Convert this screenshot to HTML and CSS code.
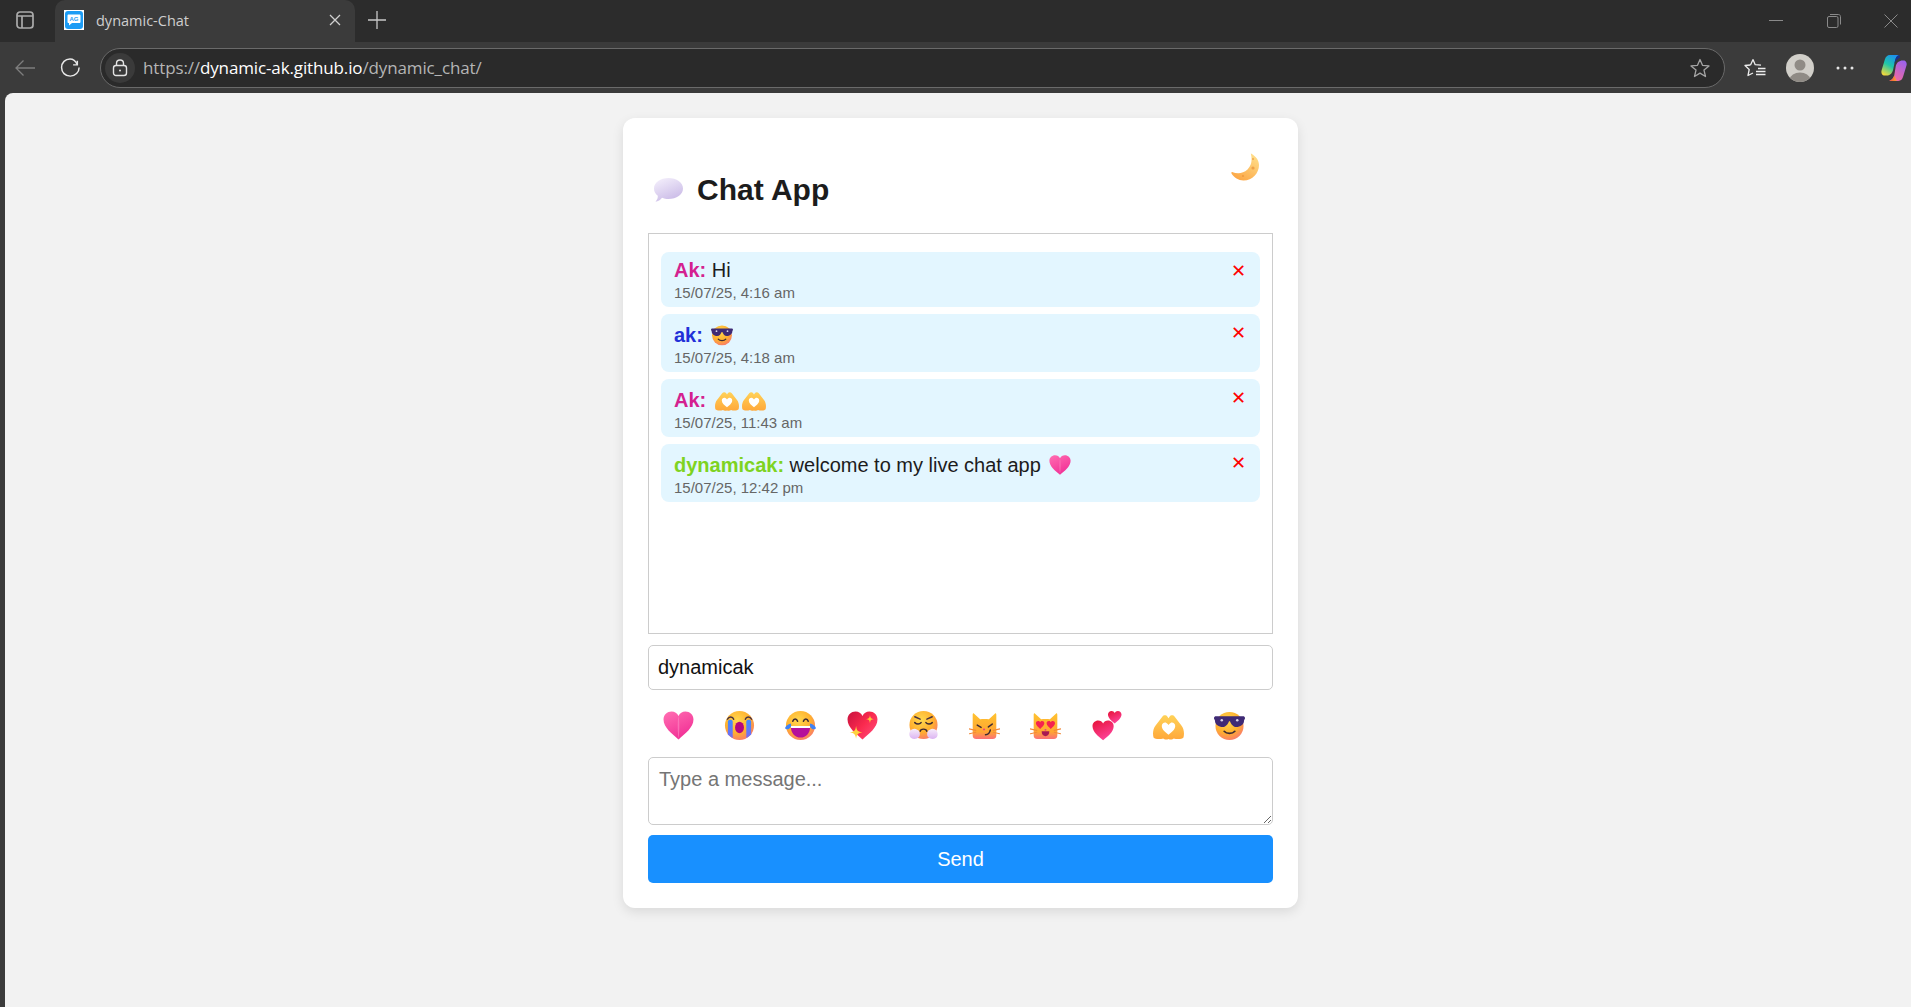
FILE: index.html
```html
<!DOCTYPE html>
<html lang="en">
<head>
    <meta charset="UTF-8">
    <meta name="viewport" content="width=device-width, initial-scale=1.0">
    <title>dynamic-Chat</title>
    <link rel="stylesheet" href="styles.css">
</head>
<body>
    <!-- shared emoji drawings -->
    <svg class="sprite" xmlns="http://www.w3.org/2000/svg">
        <defs>
            <radialGradient id="face" cx="42%" cy="32%" r="72%">
                <stop offset="0" stop-color="#ffd84f"/>
                <stop offset="0.6" stop-color="#ffb02e"/>
                <stop offset="1" stop-color="#f9786e"/>
            </radialGradient>
            <linearGradient id="pink" x1="0.2" y1="0" x2="0.7" y2="1">
                <stop offset="0" stop-color="#ff6ab0"/>
                <stop offset="1" stop-color="#f02c94"/>
            </linearGradient>
            <linearGradient id="red" x1="0" y1="0" x2="1" y2="0.8">
                <stop offset="0" stop-color="#c9123f"/>
                <stop offset="0.55" stop-color="#fa2a4e"/>
                <stop offset="1" stop-color="#ff4a78"/>
            </linearGradient>
            <linearGradient id="redpink" x1="0.2" y1="0" x2="0.7" y2="1">
                <stop offset="0" stop-color="#e8163f"/>
                <stop offset="1" stop-color="#ff46a0"/>
            </linearGradient>
            <linearGradient id="tear" x1="0" y1="0" x2="0" y2="1">
                <stop offset="0" stop-color="#3f8cff"/>
                <stop offset="1" stop-color="#7a6bf0"/>
            </linearGradient>
            <linearGradient id="hands" x1="0" y1="0" x2="0" y2="1">
                <stop offset="0" stop-color="#ffd258"/>
                <stop offset="1" stop-color="#ffa83a"/>
            </linearGradient>
            <linearGradient id="cat" x1="0" y1="0" x2="0" y2="1">
                <stop offset="0" stop-color="#ffc22f"/>
                <stop offset="0.72" stop-color="#ffa632"/>
                <stop offset="1" stop-color="#fb6f78"/>
            </linearGradient>
            <linearGradient id="moon" x1="0.8" y1="0" x2="0.2" y2="1">
                <stop offset="0" stop-color="#ffdf8a"/>
                <stop offset="1" stop-color="#fca544"/>
            </linearGradient>
            <linearGradient id="bubble" x1="0.2" y1="0" x2="0.7" y2="1">
                <stop offset="0" stop-color="#f3eefb"/>
                <stop offset="1" stop-color="#c8b8e6"/>
            </linearGradient>
            <linearGradient id="cloud" x1="0.5" y1="0" x2="0.5" y2="1">
                <stop offset="0" stop-color="#f6ecfa"/>
                <stop offset="1" stop-color="#dcb4f2"/>
            </linearGradient>
            <linearGradient id="cp1" x1="0.7" y1="0" x2="0.2" y2="1">
                <stop offset="0" stop-color="#1c8ff0"/>
                <stop offset="0.5" stop-color="#1fc7a8"/>
                <stop offset="1" stop-color="#f5d83a"/>
            </linearGradient>
            <linearGradient id="cp2" x1="0.8" y1="0" x2="0.2" y2="1">
                <stop offset="0" stop-color="#9a62ee"/>
                <stop offset="1" stop-color="#fb6a9a"/>
            </linearGradient>
            <linearGradient id="cp3" x1="0" y1="0" x2="1" y2="0">
                <stop offset="0" stop-color="#f0482a"/>
                <stop offset="1" stop-color="#f9a13a"/>
            </linearGradient>

            <path id="heart-shape" d="M16 29C10 24 2 18 2 10.5 2 6 5.5 3 9.5 3c3 0 5.3 1.6 6.5 4 1.2-2.4 3.5-4 6.5-4C26.500 3 30 6 30 10.500 30 18 22 24 16 29Z"/>
            <path id="star-shape" d="M0-6C.6-1.600 1.600-.6 6 0 1.600.6.6 1.600 0 6-.6 1.600-1.600.6-6 0-1.600-.6-.6-1.600 0-6Z"/>
            <path id="cat-head" d="M5 3.500 11.500 9.500C14 9.100 18 9.100 20.500 9.500L27 3.500C27.800 3.200 28.200 4 28.200 5V26C28.200 28.500 27 30 24.500 30H7.500C5 30 3.800 28.500 3.800 26V5C3.800 4 4.200 3.200 5 3.500Z"/>
        </defs>
        <symbol id="e-heart" viewBox="1.500 1.500 29 29">
            <use href="#heart-shape" fill="url(#pink)"/>
            <path d="M16 7C15 12 15 20 16 29 17 20 17 12 16 7Z" fill="#ff8ac4" opacity=".6"/>
        </symbol>
        <symbol id="e-cry" viewBox="0 0 32 32">
            <circle cx="16" cy="16" r="15" fill="url(#face)"/>
            <path d="M4 12C4 9.500 9 9.500 9 12V29C7 28 5 26.500 4 25Z" fill="url(#tear)"/>
            <path d="M23 12C23 9.500 28 9.500 28 12V25C27 26.500 25 28 23 29Z" fill="url(#tear)"/>
            <ellipse cx="16" cy="18" rx="4.600" ry="6" fill="#b5067f"/>
            <path d="M3.500 9.500C5 6.500 9 6.500 10 9.500M22 9.500C23 6.500 27 6.500 28.500 9.500" fill="none" stroke="#4a3340" stroke-width="1.500" stroke-linecap="round"/>
        </symbol>
        <symbol id="e-laugh" viewBox="0 0 32 32">
            <circle cx="16" cy="16" r="15" fill="url(#face)"/>
            <path d="M6 16.500H26C26 24 22 28.500 16 28.500S6 24 6 16.500Z" fill="#b5109b"/>
            <path d="M6 16.500H26L25.800 18.500H6.200Z" fill="#fff"/>
            <path d="M8 11.500C9 8.500 12 8.500 13 11.500M19 11.500C20 8.500 23 8.500 24 11.500" fill="none" stroke="#3d2a33" stroke-width="1.600" stroke-linecap="round"/>
            <path d="M0 18.500C1 16 4 14.500 6 14 7 16 6 18.500 4 19.500 2.500 20 .5 20 0 18.500Z" fill="#3f82f5"/>
            <path d="M32 18.500C31 16 28 14.500 26 14 25 16 26 18.500 28 19.500 29.500 20 31.500 20 32 18.500Z" fill="#3f82f5"/>
        </symbol>
        <symbol id="e-sparkle" viewBox="1.500 1.500 29 29">
            <use href="#heart-shape" fill="url(#red)"/>
            <use href="#star-shape" transform="translate(10 22.500)" fill="#ffd23f"/>
            <use href="#star-shape" transform="translate(23 10) scale(.65)" fill="#ffc53a"/>
        </symbol>
        <symbol id="e-steam" viewBox="0 0 32 32">
            <circle cx="16" cy="15.500" r="14.500" fill="url(#face)"/>
            <path d="M7 7 12.500 9.500M25 7 19.500 9.500" stroke="#4a3340" stroke-width="1.500" stroke-linecap="round"/>
            <path d="M7 13C9 15 12 15 13.500 13M18.500 13C20 15 23 15 25 13" fill="none" stroke="#3d2a33" stroke-width="1.600" stroke-linecap="round"/>
            <path d="M12.500 22C13 19 19 19 19.500 22" fill="none" stroke="#3d2a33" stroke-width="1.500" stroke-linecap="round"/>
            <path d="M1.500 26C.5 21 6 17.500 9.500 20.500 13 21 13.500 28.500 9 29.500 6 30.500 2 29.500 1.500 26Z" fill="url(#cloud)"/>
            <path d="M30.500 26C31.500 21 26 17.500 22.500 20.500 19 21 18.500 28.500 23 29.500 26 30.500 30 29.500 30.500 26Z" fill="url(#cloud)"/>
        </symbol>
        <symbol id="e-cat-smirk" viewBox="0 0 32 32">
            <use href="#cat-head" fill="url(#cat)"/>
            <path d="M8.500 15.500 12.500 18M24 14.500 20 17.500" stroke="#3d2a33" stroke-width="1.500" stroke-linecap="round"/>
            <circle cx="15.500" cy="20" r="1" fill="#f0308e"/>
            <path d="M17 25.500C19.500 25.500 21.500 23.500 22 20.500" fill="none" stroke="#3d2a33" stroke-width="1.500" stroke-linecap="round"/>
            <path d="M0 19.500 7 21M0.500 24.500 7 23M32 19.500 25 21M31.500 24.500 25 23" stroke="#f28a3a" stroke-width="1.200" stroke-linecap="round"/>
        </symbol>
        <symbol id="e-cat-love" viewBox="0 0 32 32">
            <use href="#cat-head" fill="url(#cat)"/>
            <use href="#heart-shape" transform="translate(5.500 10.500) scale(.31)" fill="#f5224f"/>
            <use href="#heart-shape" transform="translate(16.500 10.500) scale(.31)" fill="#f5224f"/>
            <circle cx="16" cy="20.500" r="1" fill="#f0308e"/>
            <path d="M12 22H20C20 25.500 18 27 16 27S12 25.500 12 22Z" fill="#a81852"/>
            <path d="M0 19.500 7 21M0.500 24.500 7 23M32 19.500 25 21M31.500 24.500 25 23" stroke="#f28a3a" stroke-width="1.200" stroke-linecap="round"/>
        </symbol>
        <symbol id="e-two-hearts" viewBox="0 0 32 32">
            <use href="#heart-shape" transform="translate(0 8.500) scale(.78)" fill="url(#redpink)"/>
            <use href="#heart-shape" transform="translate(16.500 -.5) scale(.5)" fill="url(#redpink)"/>
        </symbol>
        <symbol id="e-hands" viewBox="1 1 30 30">
            <path d="M16 29C14 30 12 29.500 11 28.500 8 29.500 3 29.500 1.500 27.500.5 24 1 19 3.500 16L10 7.500C11.500 5.500 14 6 15 7.500L16 9 17 7.500C18 6 20.500 5.500 22 7.500L28.500 16C31 19 31.500 24 30.500 27.500 29 29.500 24 29.500 21 28.500 20 29.500 18 30 16 29Z" fill="url(#hands)"/>
            <path d="M16 25C13 22.500 9.500 20 9.500 16.500 9.500 14 12 12.500 14 13.500 15 14 15.700 14.800 16 15.500 16.300 14.800 17 14 18 13.500 20 12.500 22.500 14 22.500 16.500 22.500 20 19 22.500 16 25Z" fill="#fff"/>
        </symbol>
        <symbol id="e-cool" viewBox="0 0 32 32">
            <circle cx="16" cy="16.500" r="14.500" fill="url(#face)"/>
            <path d="M10.500 22C13 25 19 25 21.500 22" fill="none" stroke="#3d2a33" stroke-width="1.800" stroke-linecap="round"/>
            <path d="M0 8.500C0 7 1 6.500 2 6.500H30C31 6.500 32 7 32 8.500 32 9.500 31 10 31 11 31 15 27 17.500 23 17.500 19.500 17.500 17.500 14 16.500 11.500H15.500C14.500 14 12.500 17.500 9 17.500 5 17.500 1 15 1 11 1 10 0 9.500 0 8.500Z" fill="#3f2a75"/>
            <circle cx="8" cy="10.500" r="1.300" fill="#d9d4ea"/>
            <circle cx="24" cy="10.500" r="1.300" fill="#d9d4ea"/>
        </symbol>
    </svg>

    <div class="window">
        <div class="tabstrip">
            <div class="strip-btn">
                <svg width="18" height="18" viewBox="0 0 18 18" fill="none" stroke="#ababab" stroke-width="1.700">
                    <rect x="1" y="1" width="16" height="16" rx="3"/>
                    <path d="M1 5H17M6 5V17"/>
                </svg>
            </div>
            <div class="tab">
                <svg class="favicon" width="20" height="20" viewBox="0 0 20 20">
                    <rect width="20" height="20" fill="#fff"/>
                    <rect x="1" y="1" width="18" height="18" rx="3" fill="#1c9cf5"/>
                    <path d="M4.500 4.500H15.500C16 4.500 16.500 5 16.500 5.500V12C16.500 12.500 16 13 15.500 13H8L5 15.500V13H4.500C4 13 3.500 12.500 3.500 12V5.500C3.500 5 4 4.500 4.500 4.500Z" fill="#fff"/>
                    <text class="favicon-text" x="10" y="11.200" text-anchor="middle">AG</text>
                </svg>
                <span class="tab-title">dynamic-Chat</span>
                <svg class="tab-close" width="12" height="12" viewBox="0 0 12 12" stroke="#d0d0d0" stroke-width="1.300">
                    <path d="M1 1 11 11M11 1 1 11"/>
                </svg>
            </div>
            <div class="new-tab">
                <svg width="18" height="18" viewBox="0 0 18 18" stroke="#c8c8c8" stroke-width="1.300">
                    <path d="M9 0V18M0 9H18"/>
                </svg>
            </div>
            <div class="win-controls">
                <div class="win-btn">
                    <svg width="14" height="14" viewBox="0 0 14 14" stroke="#8a8a8a" stroke-width="1"><path d="M0 6.500H14"/></svg>
                </div>
                <div class="win-btn">
                    <svg width="14" height="14" viewBox="0 0 14 14" fill="none" stroke="#8a8a8a" stroke-width="1">
                        <rect x=".5" y="2.500" width="10.500" height="11" rx="1.500"/>
                        <path d="M3 .5H11.500C12.500 .5 13.500 1.500 13.500 2.500V10.500"/>
                    </svg>
                </div>
                <div class="win-btn">
                    <svg width="14" height="14" viewBox="0 0 14 14" stroke="#8a8a8a" stroke-width="1"><path d="M.5.5 13.500 13.500M13.500.5.5 13.500"/></svg>
                </div>
            </div>
        </div>

        <div class="toolbar">
            <div class="tool-btn">
                <svg width="20" height="18" viewBox="0 0 20 18" fill="none" stroke="#7e7e7e" stroke-width="1.300">
                    <path d="M20 9H1M8.500 1.500 1 9 8.500 16.500"/>
                </svg>
            </div>
            <div class="tool-btn">
                <svg width="21" height="21" viewBox="0 0 20 20" fill="none" stroke="#e8e8e8" stroke-width="1.400">
                    <path d="M16.500 3.500V7.500H12.500"/>
                    <path d="M16.300 7C14.900 3.800 12.300 1.800 9.500 1.800 5 1.800 1.500 5.400 1.500 10S5 18.200 9.800 18.200 18.200 14.500 18.200 10"/>
                </svg>
            </div>
            <div class="address">
                <span class="lock">
                    <svg width="16" height="18" viewBox="0 0 16 18" fill="none" stroke="#e4e4e4" stroke-width="1.400">
                        <rect x="1.500" y="6.500" width="13" height="10" rx="2.500"/>
                        <path d="M4.500 6.500V4.500C4.500 2.500 6 1 8 1S11.500 2.500 11.500 4.500V6.500"/>
                        <circle cx="8" cy="11.500" r="1" fill="#e4e4e4" stroke="none"/>
                    </svg>
                </span>
                <span class="url">https://<b>dynamic-ak.github.io</b>/dynamic_chat/</span>
                <svg class="addr-star" width="20" height="20" viewBox="0 0 20 20" fill="none" stroke="#a5a5a5" stroke-width="1.300" stroke-linejoin="round">
                    <path d="M10 1.500 12.500 7.300 19 7.900 14 12.100 15.500 18.500 10 15.100 4.500 18.500 6 12.100 1 7.900 7.500 7.300Z"/>
                </svg>
            </div>
            <div class="tool-btn">
                <svg width="22" height="20" viewBox="0 0 22 20" fill="none" stroke="#ececec" stroke-width="1.300" stroke-linejoin="round">
                    <path d="M9 1.500 11.200 6.700 17 7.200M6.500 7 1 7.500 5.200 11.500 4 17.500 9 15"/>
                    <path d="M6.500 7 9 1.500M14 10.500H21.500M12 13.500H21.500M12 16.500H21.500" />
                </svg>
            </div>
            <div class="tool-btn">
                <svg width="28" height="28" viewBox="0 0 28 28">
                    <clipPath id="avatar-clip"><circle cx="14" cy="14" r="14"/></clipPath>
                    <circle cx="14" cy="14" r="14" fill="#d1cfc9"/>
                    <g clip-path="url(#avatar-clip)" fill="#8f8b85">
                        <circle cx="14" cy="11" r="5.500"/>
                        <ellipse cx="14" cy="25" rx="10" ry="6.500"/>
                    </g>
                </svg>
            </div>
            <div class="tool-btn">
                <svg width="18" height="4" viewBox="0 0 18 4" fill="#e6e6e6">
                    <circle cx="2" cy="2" r="1.500"/><circle cx="9" cy="2" r="1.500"/><circle cx="16" cy="2" r="1.500"/>
                </svg>
            </div>
            <div class="tool-btn copilot">
                <svg width="28" height="28" viewBox="0 0 24 26">
                    <path d="M8 1H17C14.500 1.500 13.500 4 13 6L11.500 13C11 17 9 20 5 20H3.500C1 20-.2 17.500.5 15L3.500 5C4.300 2.500 6 1 8 1Z" fill="url(#cp1)"/>
                    <path d="M17 1C14.500 1.500 13.500 4 13 6L12 10C13 7 15 4.500 17.500 3.500Z" fill="#17308f"/>
                    <path d="M16 25H7.500C10 24.500 11.500 22 12.200 20L13.500 12C14 8 17 6 20 6H21C23 6 24.500 8.500 23.500 11L20.500 21C19.800 23.500 18.500 25 16 25Z" fill="url(#cp2)"/>
                    <path d="M6.500 20.500H12C11.500 22.500 10 24.500 7.500 25H14.500L13 21.500 12.500 20.500Z" fill="url(#cp3)"/>
                </svg>
            </div>
        </div>

        <div class="page">
            <div class="chat-card">
                <button class="theme-toggle" type="button">
                    <svg width="28" height="28" viewBox="0 0 28 28">
                        <path d="M20 .5C24.500 3 28 7 28 12 28 20 21.500 27.500 12.500 27.500 7.500 27.500 3 24.500.5 20.500 0 19.500.8 18.800 1.800 19.200 6 20.800 12 20.800 16.500 16.500 20 13 21.500 8 20 1.500 19.800.6 19.800.4 20 .5Z" fill="url(#moon)"/>
                        <g fill="#e8923a" opacity=".7">
                            <circle cx="22" cy="6" r="1"/>
                            <circle cx="22" cy="15" r="1.600"/>
                            <circle cx="12" cy="23" r="1.100"/>
                        </g>
                    </svg>
                </button>
                <h1 class="chat-title">
                    <svg class="title-icon" width="31" height="28" viewBox="0 0 31 28">
                        <path d="M15.500 2C23.500 2 30 6.500 30 12.500S23.500 23 15.500 23C13 23 11 22.600 9 21.800 7.500 23.800 5 25.500 2.500 25.800 4 24 5 22 4.800 19.800 2.300 18 1 15.500 1 12.500 1 6.500 7.500 2 15.500 2Z" fill="url(#bubble)"/>
                    </svg>
                    <span>Chat App</span>
                </h1>

                <div class="messages">
                    <div class="message">
                        <div>
                            <div class="msg-line"><strong class="user-pink">Ak:</strong> Hi</div>
                            <div class="msg-time">15/07/25, 4:16 am</div>
                        </div>
                        <span class="msg-delete">✕</span>
                    </div>
                    <div class="message">
                        <div>
                            <div class="msg-line"><strong class="user-blue">ak:</strong> <svg class="msg-emoji msg-emoji-sm"><use href="#e-cool"/></svg></div>
                            <div class="msg-time">15/07/25, 4:18 am</div>
                        </div>
                        <span class="msg-delete">✕</span>
                    </div>
                    <div class="message">
                        <div>
                            <div class="msg-line"><strong class="user-pink">Ak:</strong> <svg class="msg-emoji"><use href="#e-hands"/></svg><svg class="msg-emoji"><use href="#e-hands"/></svg></div>
                            <div class="msg-time">15/07/25, 11:43 am</div>
                        </div>
                        <span class="msg-delete">✕</span>
                    </div>
                    <div class="message">
                        <div>
                            <div class="msg-line"><strong class="user-green">dynamicak:</strong> welcome to my live chat app <svg class="msg-emoji msg-emoji-sm"><use href="#e-heart"/></svg></div>
                            <div class="msg-time">15/07/25, 12:42 pm</div>
                        </div>
                        <span class="msg-delete">✕</span>
                    </div>
                </div>

                <input class="name-input" type="text" value="dynamicak">

                <div class="emoji-row">
                    <button class="emoji-btn" type="button"><svg><use href="#e-heart"/></svg></button>
                    <button class="emoji-btn" type="button"><svg><use href="#e-cry"/></svg></button>
                    <button class="emoji-btn" type="button"><svg><use href="#e-laugh"/></svg></button>
                    <button class="emoji-btn" type="button"><svg><use href="#e-sparkle"/></svg></button>
                    <button class="emoji-btn" type="button"><svg><use href="#e-steam"/></svg></button>
                    <button class="emoji-btn" type="button"><svg><use href="#e-cat-smirk"/></svg></button>
                    <button class="emoji-btn" type="button"><svg><use href="#e-cat-love"/></svg></button>
                    <button class="emoji-btn" type="button"><svg><use href="#e-two-hearts"/></svg></button>
                    <button class="emoji-btn" type="button"><svg><use href="#e-hands"/></svg></button>
                    <button class="emoji-btn" type="button"><svg><use href="#e-cool"/></svg></button>
                </div>

                <textarea class="msg-input" placeholder="Type a message..."></textarea>
                <button class="send-btn" type="button">Send</button>
            </div>
        </div>
    </div>
</body>
</html>
```

FILE: styles.css
```css
body {
    margin: 0;
    overflow: hidden;
    height: 100vh;
    background-color: #3b3b3b;
    font-family: 'Liberation Sans', Arial, sans-serif;
}
.sprite {
    display: block;
    width: 0;
    height: 0;
}
/* window is a few px wider than the visible area, the right edge is cut off */
.window {
    width: 1916px;
    height: 100vh;
    display: flex;
    flex-direction: column;
}

/* Browser tabs */
.tabstrip {
    height: 42px;
    flex: none;
    display: flex;
    background-color: #2c2c2c;
}
.strip-btn {
    width: 50px;
    margin-right: 5px;
    padding-bottom: 2px;
    display: flex;
    align-items: center;
    justify-content: center;
}
.tab {
    width: 300px;
    display: flex;
    align-items: center;
    box-sizing: border-box;
    padding: 0 14px 2px 9px;
    background-color: #3b3b3b;
    border-radius: 10px 10px 0 0;
}
.favicon {
    flex: none;
}
.favicon-text {
    font-size: 6px;
    font-weight: bold;
    fill: #1c9cf5;
}
.tab-title {
    flex: 1;
    margin-left: 12px;
    font-family: 'Open Sans', sans-serif;
    font-size: 14.5px;
    color: #cfcfcf;
}
.new-tab {
    width: 44px;
    padding-bottom: 2px;
    display: flex;
    align-items: center;
    justify-content: center;
}
.win-controls {
    margin-left: auto;
    display: flex;
    gap: 7.5px;
}
.win-btn {
    width: 50px;
    display: flex;
    align-items: center;
    justify-content: center;
}

/* Address bar row */
.toolbar {
    height: 51px;
    flex: none;
    display: flex;
    align-items: center;
    padding-left: 2.5px;
    background-color: #3b3b3b;
}
.tool-btn {
    width: 45px;
    flex: none;
    display: flex;
    align-items: center;
    justify-content: center;
}
.copilot {
    width: 44px;
    margin-left: 5px;
}
.address {
    flex: 1;
    height: 40px;
    margin: 0 7px 0 7.5px;
    box-sizing: border-box;
    display: flex;
    align-items: center;
    padding: 0 14px 0 4px;
    background-color: #2a2a2a;
    border: 1px solid #6a6a6a;
    border-radius: 20px;
}
.lock {
    width: 30px;
    height: 30px;
    flex: none;
    display: flex;
    align-items: center;
    justify-content: center;
    background-color: #3a3a3a;
    border-radius: 50%;
}
.url {
    flex: 1;
    margin-left: 8px;
    font-family: 'Open Sans', sans-serif;
    font-size: 17px;
    letter-spacing: -0.13px;
    color: #b5b5b5;
}
.url b {
    font-weight: normal;
    color: #fff;
}

/* Page */
.page {
    flex: 1;
    margin-left: 5px;
    display: flex;
    justify-content: center;
    align-items: flex-start;
    padding-top: 25px;
    background-color: #f2f2f2;
    border-radius: 8px 0 0 0;
}
.chat-card {
    position: relative;
    width: 675px;
    height: 790px;
    box-sizing: border-box;
    padding: 0 25px;
    background-color: #fff;
    border-radius: 12px;
    box-shadow: 0 4px 12px rgba(0, 0, 0, 0.1);
}
.theme-toggle {
    position: absolute;
    top: 35px;
    right: 39px;
    padding: 0;
    border: none;
    background: none;
    line-height: 0;
}
.chat-title {
    margin: 0;
    padding: 55px 0 26px 5px;
    display: flex;
    align-items: center;
    gap: 13px;
    font-size: 30px;
    line-height: 34px;
    color: #1c1c1c;
}
.messages {
    height: 401px;
    box-sizing: border-box;
    padding: 18px 12px 0;
    border: 1px solid #ccc;
}
.message {
    display: flex;
    justify-content: space-between;
    margin-bottom: 7px;
    padding: 7px 14px 6px 13px;
    background-color: #e3f6ff;
    border-radius: 8px;
}
.msg-line {
    font-size: 20px;
    color: #1c1c1c;
}
.user-pink {
    color: #d4218f;
}
.user-blue {
    color: #2230d8;
}
.user-green {
    color: #7ed321;
}
.msg-emoji {
    width: 24px;
    height: 24px;
    margin: 2px 0 0 3px;
    vertical-align: -5px;
}
.msg-emoji-sm {
    width: 22px;
    height: 22px;
    margin-top: 3px;
    vertical-align: -4px;
}
.msg-time {
    margin-top: 2px;
    font-size: 15px;
    color: #666;
}
.msg-delete {
    margin-top: 1px;
    font-family: 'DejaVu Sans', sans-serif;
    font-size: 18px;
    font-weight: bold;
    color: #f00;
}
.name-input {
    display: block;
    width: 100%;
    height: 45px;
    margin-top: 11px;
    box-sizing: border-box;
    padding: 0 9px;
    font-family: inherit;
    font-size: 20px;
    color: #111;
    border: 1px solid #ccc;
    border-radius: 5px;
}
.emoji-row {
    height: 67px;
    display: flex;
    align-items: center;
    gap: 30.2px;
    padding: 3px 0 0 15px;
    box-sizing: border-box;
}
.emoji-btn {
    padding: 0;
    width: 31px;
    height: 31px;
    border: none;
    background: none;
}
.emoji-btn svg {
    display: block;
    width: 31px;
    height: 31px;
}
.msg-input {
    display: block;
    width: 100%;
    height: 68px;
    box-sizing: border-box;
    padding: 10px;
    font-family: inherit;
    font-size: 20px;
    border: 1px solid #ccc;
    border-radius: 5px;
}
.send-btn {
    display: block;
    width: 100%;
    height: 48px;
    margin-top: 10px;
    font-family: inherit;
    font-size: 20px;
    color: #fff;
    background-color: #1890ff;
    border: none;
    border-radius: 5px;
}
```
